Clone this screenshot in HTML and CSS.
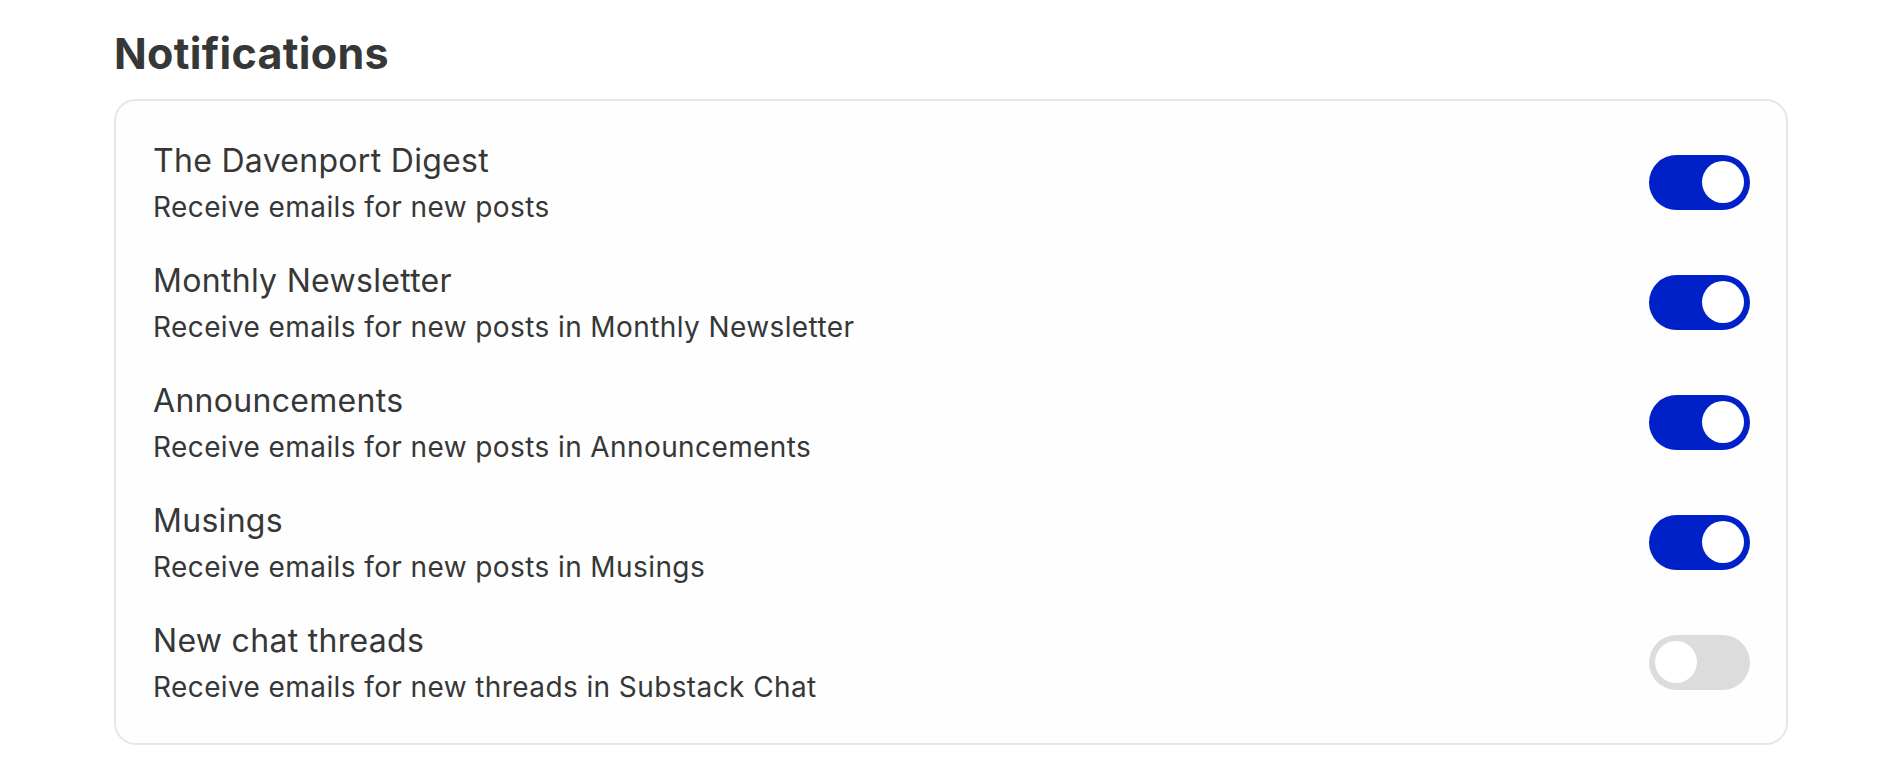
FILE: index.html
```html
<!DOCTYPE html>
<html>
<head>
<meta charset="utf-8">
<link rel="stylesheet" href="styles.css">
</head>
<body>
<main class="page">
  <h1 class="heading">Notifications</h1>
  <section class="card">
    <div class="row">
      <div class="text">
        <div class="title">The Davenport Digest</div>
        <div class="desc">Receive emails for new posts</div>
      </div>
      <div class="toggle on"><span class="knob"></span></div>
    </div>
    <div class="row">
      <div class="text">
        <div class="title">Monthly Newsletter</div>
        <div class="desc">Receive emails for new posts in Monthly Newsletter</div>
      </div>
      <div class="toggle on"><span class="knob"></span></div>
    </div>
    <div class="row">
      <div class="text">
        <div class="title">Announcements</div>
        <div class="desc">Receive emails for new posts in Announcements</div>
      </div>
      <div class="toggle on"><span class="knob"></span></div>
    </div>
    <div class="row">
      <div class="text">
        <div class="title">Musings</div>
        <div class="desc">Receive emails for new posts in Musings</div>
      </div>
      <div class="toggle on"><span class="knob"></span></div>
    </div>
    <div class="row">
      <div class="text">
        <div class="title">New chat threads</div>
        <div class="desc">Receive emails for new threads in Substack Chat</div>
      </div>
      <div class="toggle off"><span class="knob"></span></div>
    </div>
  </section>
</main>
</body>
</html>
```
FILE: styles.css
```css
* { box-sizing: border-box; }
html, body { margin: 0; padding: 0; background: #ffffff; }
body {
  font-family: Inter, "Noto Sans", "Liberation Sans", sans-serif;
  color: #363737;
}
.page {
  padding: 28px 0 0 114px;
  width: 1788px;
}
.heading {
  margin: 0 0 21px 0;
  font-size: 43px;
  line-height: 50px;
  font-weight: 700;
  letter-spacing: 0.3px;
  color: #363737;
}
.card {
  border: 2px solid #e6e6e6;
  border-radius: 22px;
  background: #fefefe;
  padding: 21px 36px 21px 37px;
}
.row {
  height: 120px;
  display: flex;
  align-items: center;
  justify-content: space-between;
}
.text {
  display: flex;
  flex-direction: column;
  padding-top: 3px;
}
.title {
  font-size: 32px;
  line-height: 40px;
  font-weight: 400;
  letter-spacing: 0.3px;
}
.desc {
  margin-top: 6px;
  font-size: 28px;
  line-height: 40px;
  font-weight: 400;
  letter-spacing: 0.4px;
}
.toggle {
  width: 101px;
  height: 55px;
  border-radius: 28px;
  padding: 0 6px;
  display: flex;
  align-items: center;
}
.toggle.on { background: #0020c8; justify-content: flex-end; }
.toggle.off { background: #dcdcdc; justify-content: flex-start; }
.knob {
  width: 42px;
  height: 42px;
  border-radius: 50%;
  background: #ffffff;
}
```
